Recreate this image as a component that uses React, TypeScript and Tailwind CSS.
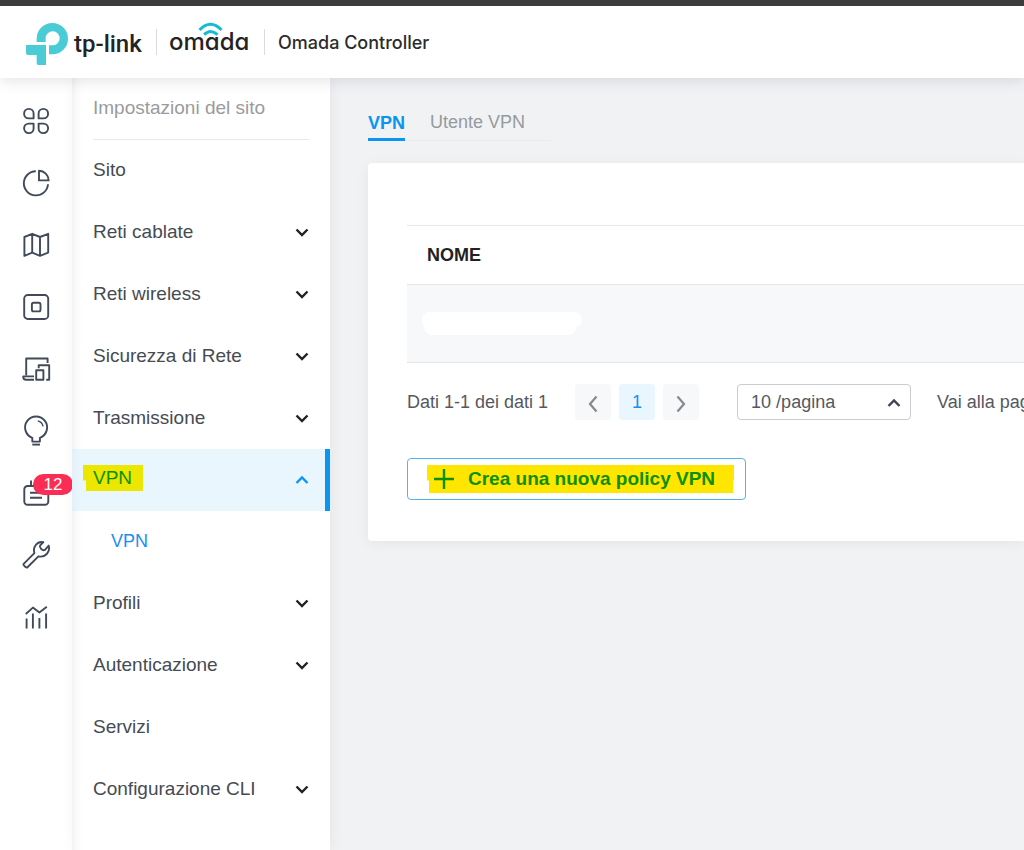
import { useState, type ReactNode } from "react";

function NavIcon({ children }: { children: ReactNode }) {
  return (
    <svg
      viewBox="0 0 28 28"
      className="size-7 overflow-visible"
      fill="none"
      stroke="#414a59"
      strokeWidth="1.9"
      strokeLinejoin="round"
      aria-hidden="true"
    >
      {children}
    </svg>
  );
}

const navIcons: { label: string; icon: ReactNode; badge?: string }[] = [
  {
    label: "Dashboard",
    icon: (
      <>
        <path d="M11.6 11.4H6.8A4.75 4.75 0 1 1 11.6 6.6Z" />
        <path d="M16.6 11.4H21.4A4.75 4.75 0 1 0 16.6 6.6Z" />
        <path d="M11.6 16.6H6.8A4.75 4.75 0 1 0 11.6 21.4Z" />
        <path d="M16.6 16.6H21.4A4.75 4.75 0 1 1 16.6 21.4Z" />
      </>
    ),
  },
  {
    label: "Statistiche",
    icon: (
      <>
        <path d="M13.8 2.2A12.1 12.1 0 1 0 26 15.2" />
        <path d="M17 1.8V11.4H26.7A9.8 9.8 0 0 0 17 1.8Z" />
      </>
    ),
  },
  {
    label: "Mappa",
    icon: (
      <path d="M2.4 6L10.2 2.8L18 6L26.2 2.8V21.6L18 24.8L10.2 21.6L2.4 24.8ZM10.2 2.8V21.6M18 6V24.8" />
    ),
  },
  {
    label: "Dispositivi",
    icon: (
      <>
        <rect x="2.2" y="2" width="24" height="24" rx="3.6" />
        <rect x="9.9" y="9.8" width="8.6" height="8.6" rx="1.6" />
      </>
    ),
  },
  {
    label: "Client",
    icon: (
      <>
        <path d="M4.2 20.4V3.5H25.6V8" />
        <path d="M12 21.4H1.2C1.2 24 2.2 24.8 4.2 24.8H12" />
        <path d="M16.7 13.2V10.3H27.2V24.8H24.2" />
        <rect x="14.2" y="15.2" width="7.2" height="9.6" />
      </>
    ),
  },
  {
    label: "Approfondimenti",
    icon: (
      <>
        <path d="M10.3 24.6V20.8A11 11 0 1 1 17.9 20.8V24.6Z" />
        <path d="M10.3 27.6H18" />
        <path d="M15.8 3.9A6.8 6.8 0 0 1 21 9.4" strokeWidth="1.4" />
      </>
    ),
  },
  {
    label: "Registro",
    badge: "12",
    icon: (
      <path d="M5.6 7H23A3.3 3.3 0 0 1 26.3 10.3V22.5A3.3 3.3 0 0 1 23 25.8H5.6A3.3 3.3 0 0 1 2.3 22.5V10.3A3.3 3.3 0 0 1 5.6 7ZM9 1.5V7M8 13.8H19M8 18.8H20" />
    ),
  },
  {
    label: "Strumenti",
    icon: (
      <path d="M1.4 23.2L12.4 12.2C10.6 6.5 14.8 -0.2 21.4 1.2L18 4.7C17.2 6.7 20.4 10.2 23 8.8L26.7 4.6C28.6 11 23 17 16.4 15.3L5.2 26.5C4.5 27.1 1 24.2 1.4 23.2Z" />
    ),
  },
  {
    label: "Report",
    icon: (
      <path d="M4.6 15.6V25.5M10.9 10.6V25.5M17.4 15V25.5M24.1 10.6V25.5M3.8 11L10.9 4.6L17.4 9.6L24.8 3.8" />
    ),
  },
];

const menu: { label: string; expandable: boolean; active?: boolean }[] = [
  { label: "Sito", expandable: false },
  { label: "Reti cablate", expandable: true },
  { label: "Reti wireless", expandable: true },
  { label: "Sicurezza di Rete", expandable: true },
  { label: "Trasmissione", expandable: true },
  { label: "VPN", expandable: true, active: true },
  { label: "Profili", expandable: true },
  { label: "Autenticazione", expandable: true },
  { label: "Servizi", expandable: false },
  { label: "Configurazione CLI", expandable: true },
];

function Chevron({ className, up = false }: { className: string; up?: boolean }) {
  return (
    <svg
      viewBox="0 0 14 10"
      className={className}
      fill="none"
      stroke="currentColor"
      strokeWidth="2.4"
      aria-hidden="true"
    >
      <path d={up ? "M1.5 8L7 2.5L12.5 8" : "M1.5 2.5L7 8L12.5 2.5"} />
    </svg>
  );
}

function Header() {
  return (
    <header className="relative z-10 flex h-[78px] items-center border-t-[6px] border-[#3c3c3c] bg-white pl-[25px] shadow-[0_2px_14px_rgba(40,45,70,0.14)]">
      <a href="#" className="flex items-center" aria-label="tp-link">
        <svg viewBox="75 66 132 132" className="mt-1 size-11 shrink-0" fill="#4acbd6" aria-hidden="true">
          <path d="M110 126V116A47 47 0 1 1 157 163H147V136H157A21 21 0 1 0 137 115V126Z" />
          <path d="M78 135H138V195H116Q110 195 110 189V165H84Q78 165 78 159Z" />
        </svg>
        <span className="mt-1 ml-[5px] w-[68px] font-['Roboto',sans-serif] text-[24px] leading-7 font-medium whitespace-nowrap text-[#232323]">
          tp-link
        </span>
      </a>
      <span className="ml-3.5 h-[26px] w-px bg-[#d9dcde]" />
      <a href="#" className="relative ml-3 w-20 font-['Inter',sans-serif] text-[24px] leading-7 font-medium whitespace-nowrap text-[#232323] [font-feature-settings:'cv11']">
        omada
        <svg
          viewBox="597 69 74 42"
          className="absolute -top-1.5 left-[29px] h-[14px] w-[25px]"
          fill="none"
          stroke="#12bdd3"
          strokeWidth="9"
          aria-hidden="true"
        >
          <path d="M601 93Q634 58 667 93M615 107Q634 88 655 107" />
        </svg>
      </a>
      <span className="ml-[15px] h-[26px] w-px bg-[#d9dcde]" />
      <h1 className="ml-[13px] font-['Inter',sans-serif] text-[18px] font-medium text-[#2b2b2b]">
        Omada Controller
      </h1>
    </header>
  );
}

function IconRail() {
  return (
    <nav aria-label="Principale" className="w-[72px] shrink-0 overflow-hidden bg-white pt-3">
      {navIcons.map((item) => (
        <a
          key={item.label}
          href="#"
          aria-label={item.label}
          className="relative flex h-[62px] items-center justify-center"
        >
          <NavIcon>{item.icon}</NavIcon>
          {item.badge && (
            <span className="absolute top-3 left-[33px] flex h-[21px] w-10 items-center justify-center rounded-full bg-[#fb2d55] text-[17px] leading-5 text-white">
              {item.badge}
            </span>
          )}
        </a>
      ))}
    </nav>
  );
}

function SiteMenu() {
  return (
    <nav
      aria-label="Impostazioni del sito"
      className="w-[258px] shrink-0 bg-white text-[19px] text-[#464b53] shadow-[inset_12px_0_12px_-12px_rgba(0,0,0,0.1),2px_0_14px_rgba(0,0,0,0.05)]"
    >
      <h2 className="mx-[21px] flex h-[62px] items-center border-b border-[#e9eaec] text-[#999b9e]">
        Impostazioni del sito
      </h2>
      <ul className="-mt-px">
        {menu.map((item) => (
          <li key={item.label}>
            <button
              type="button"
              className={
                item.active
                  ? "flex h-[62px] w-full items-center justify-between border-r-[5px] border-[#0a95ee] bg-[#d8eefb]/55 pr-4 pl-[11px] text-[#0c9000]"
                  : "flex h-[62px] w-full items-center justify-between pr-[21px] pl-[21px]"
              }
            >
              {item.active ? (
                <span className="mb-1 bg-[#ebe700] py-px pr-[11px] pl-2.5 leading-6 [clip-path:polygon(0_0,100%_0,100%_100%,3px_100%,3px_60%,0_60%)]">
                  {item.label}
                </span>
              ) : (
                <span>{item.label}</span>
              )}
              {item.expandable && (
                <Chevron
                  up={item.active}
                  className={
                    item.active
                      ? "h-2.5 w-3.5 text-[#0a95ee]"
                      : "h-2.5 w-3.5 text-[#222222]"
                  }
                />
              )}
            </button>
            {item.active && (
              <a href="#" className="flex h-[61px] items-center pl-[39px] text-[18px] text-[#1a90ee]">
                VPN
              </a>
            )}
          </li>
        ))}
      </ul>
    </nav>
  );
}

function Pagination() {
  const [size, setSize] = useState("10");
  return (
    <div className="mt-[21px] flex items-center overflow-hidden whitespace-nowrap text-[#55595f]">
      <span>Dati 1-1 dei dati 1</span>
      <div className="ml-[27px] flex gap-2">
        <button
          type="button"
          aria-label="Pagina precedente"
          className="flex size-9 items-center justify-center rounded bg-[#f7f8fa] text-[#85898f]"
        >
          <svg viewBox="0 0 12 18" className="mt-1 h-[18px] w-3" fill="none" stroke="currentColor" strokeWidth="2.2" aria-hidden="true">
            <path d="M9.5 1.5L3 9L9.5 16.5" />
          </svg>
        </button>
        <button type="button" className="size-9 rounded bg-[#eaf6fe] text-[#1a90ee]">
          1
        </button>
        <button
          type="button"
          aria-label="Pagina successiva"
          className="flex size-9 items-center justify-center rounded bg-[#f7f8fa] text-[#85898f]"
        >
          <svg viewBox="0 0 12 18" className="mt-1 h-[18px] w-3" fill="none" stroke="currentColor" strokeWidth="2.2" aria-hidden="true">
            <path d="M2.5 1.5L9 9L2.5 16.5" />
          </svg>
        </button>
      </div>
      <div className="relative ml-[38px] shrink-0">
        <select
          aria-label="Elementi per pagina"
          value={size}
          onChange={(event) => setSize(event.target.value)}
          className="h-9 w-[174px] appearance-none rounded border border-[#c9cccf] bg-white pl-[13px] text-[18px]"
        >
          <option value="10">10 /pagina</option>
          <option value="20">20 /pagina</option>
          <option value="50">50 /pagina</option>
        </select>
        <Chevron up className="pointer-events-none absolute top-3.5 right-2.5 h-2.5 w-3.5 text-[#3d4352]" />
      </div>
      <span className="ml-[26px]">Vai alla pagina</span>
    </div>
  );
}

function Content() {
  return (
    <main className="min-w-0 flex-1 pt-[26px] pl-[38px] text-[18px]">
      <div className="flex w-[183px] gap-[25px] border-b border-[#e9eaec]">
        <button type="button" className="-mb-px border-b-[3px] border-[#0a95ee] pt-1 pb-px leading-7 font-bold text-[#0a95ee]">
          VPN
        </button>
        <button type="button" className="pt-1 pb-1 leading-7 whitespace-nowrap text-[#969a9d]">
          Utente VPN
        </button>
      </div>
      <section className="mt-[22px] rounded-l bg-white pt-[62px] pb-[41px] pl-[39px] shadow-[0_2px_14px_rgba(0,0,0,0.06)]">
        <table className="w-full border-collapse text-left">
          <thead>
            <tr className="h-[59px] border-y border-[#e6e7e9]">
              <th className="pl-5 font-bold text-[#222222]">NOME</th>
            </tr>
          </thead>
          <tbody>
            <tr className="h-[78px] border-b border-[#e2e4e6] bg-[#f7f8fa]">
              <td className="pl-[15px]">
                <svg viewBox="0 0 160 24" className="h-6 w-40" fill="#ffffff" aria-hidden="true">
                  <path d="M7 0H152C162 1 162 13 154 15Q153 23 147 23H9Q3 22 2 14C-2 10 0 1 7 0Z" />
                </svg>
              </td>
            </tr>
          </tbody>
        </table>
        <Pagination />
        <button
          type="button"
          className="mt-[38px] flex h-[42px] items-center rounded border border-[#55b2ef] pr-[11px] pl-[19px] text-[19px] font-bold text-[#0c9000]"
        >
          <span className="flex h-7 items-center bg-[#ffe600] pr-[19px] pl-[7px] whitespace-nowrap [clip-path:polygon(0_0,100%_0,100%_55%,306px_55%,306px_100%,2px_100%,2px_55%,0_55%)]">
            <svg viewBox="0 0 20 20" className="mr-3.5 size-5" fill="none" stroke="currentColor" strokeWidth="2.4" aria-hidden="true">
              <path d="M10 0V20M0 10H20" />
            </svg>
            Crea una nuova policy VPN
          </span>
        </button>
      </section>
    </main>
  );
}

export default function App() {
  return (
    <div className="flex min-h-screen flex-col overflow-x-hidden bg-[#f1f2f4] font-['Liberation_Sans',Arial,sans-serif]">
      <Header />
      <div className="flex flex-1">
        <IconRail />
        <SiteMenu />
        <Content />
      </div>
    </div>
  );
}
